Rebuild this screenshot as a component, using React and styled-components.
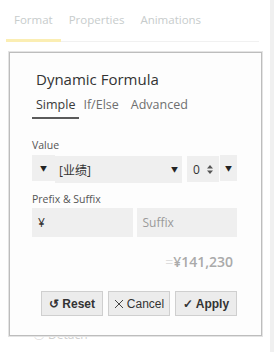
import * as React from "react";
import styled, { createGlobalStyle } from "styled-components";

const Global = createGlobalStyle`
  html, body {
    margin: 0;
    padding: 0;
    background: #fff;
  }
  body {
    width: 274px;
    height: 352px;
    overflow: hidden;
    font-family: "Open Sans", "Noto Sans CJK SC", sans-serif;
  }
`;

const Page = styled.div`
  position: relative;
  display: flex;
  width: 274px;
  height: 352px;
`;

const Panel = styled.div`
  flex: 1;
  display: flex;
  flex-direction: column;
`;

/* right scroll track */
const Track = styled.div`
  width: 4px;
  background: #f0f0f0;
`;

const TabBar = styled.div`
  display: flex;
  margin: 0 11px 0 6px;
  height: 41px;
  border-bottom: 1px solid #f1f1f1;
`;

const Tab = styled.div`
  padding: 12px 8px 0;
  font-size: 11.5px;
  color: #c7cccc;
  box-sizing: border-box;
  border-bottom: 3px solid ${(p) => (p.active ? "#fbeeb3" : "transparent")};
  margin-bottom: -1px;
`;

const Behind = styled.div`
  padding: 283px 0 0 33px;
  font-size: 12px;
  color: #cfcfcf;
`;

const Dialog = styled.div`
  position: absolute;
  left: 9px;
  top: 52px;
  width: 205px;
  height: 282px;
  background: #fdfdfd;
  border: 1px solid #bdbdbd;
  box-shadow: 0 0 0 1px #e4e4e4;
  padding: 0 24px 0 22px;
  display: flex;
  flex-direction: column;
  box-sizing: content-box;
`;

const Title = styled.div`
  margin: 15px 0 0 4px;
  font-size: 15px;
  color: #333;
  line-height: 22px;
`;

const SubTabs = styled.div`
  display: flex;
  margin-top: 6px;
`;

const SubTab = styled.div`
  padding: 0 4px 3px;
  margin-right: ${(p) => (p.active ? "0" : "4px")};
  font-size: 12.5px;
  line-height: 18px;
  color: ${(p) => (p.active ? "#3a3a3a" : "#6f6f6f")};
  border-bottom: 2px solid ${(p) => (p.active ? "#5a5a5a" : "transparent")};
`;

const Label = styled.div`
  margin-top: ${(p) => p.top}px;
  font-size: 10.5px;
  color: #555;
  line-height: 14px;
`;

const Row = styled.div`
  display: flex;
  align-items: flex-start;
  margin-top: ${(p) => p.top}px;
`;

const Field = styled.div`
  display: flex;
  align-items: center;
  justify-content: ${(p) => p.justify || "flex-start"};
  box-sizing: border-box;
  width: ${(p) => p.w}px;
  height: ${(p) => p.h}px;
  margin-left: ${(p) => p.gap || 0}px;
  margin-top: ${(p) => p.dy || 0}px;
  padding: 0 ${(p) => p.pad || 6}px;
  background: #efefef;
  font-size: 12px;
  color: ${(p) => (p.placeholder ? "#9a9a9a" : "#333")};
`;

const Caret = styled.span`
  font-size: 7px;
  color: #222;
  line-height: 1;
`;

const Result = styled.div`
  margin-top: 15px;
  align-self: flex-end;
  margin-right: 4px;
  font-size: 14px;
  font-weight: 600;
  color: #aaaaaa;
  line-height: 20px;
`;

const Eq = styled.span`
  color: #dddddd;
  font-weight: 400;
`;

const Buttons = styled.div`
  display: flex;
  justify-content: flex-end;
  gap: 5px;
  margin-top: 19px;
`;

const Button = styled.button`
  width: 62px;
  height: 25px;
  box-sizing: border-box;
  border: 1px solid #cfcfcf;
  background: #ececec;
  font-family: "Liberation Sans", Arial, sans-serif;
  font-size: 12px;
  font-weight: ${(p) => (p.light ? 400 : 700)};
  color: #333;
  display: flex;
  align-items: center;
  justify-content: center;
  gap: 3px;
  padding: 0;
`;

const Spinner = () => (
  <svg width="6" height="9" viewBox="0 0 6 9">
    <path d="M3 0 L6 3.5 L0 3.5 Z M3 9 L6 5.5 L0 5.5 Z" fill="#555" />
  </svg>
);

const XIcon = () => (
  <svg width="10" height="10" viewBox="0 0 10 10">
    <path d="M1 1 L9 9 M9 1 L1 9" stroke="#444" strokeWidth="1" />
  </svg>
);

export default function App() {
  return (
    <>
      <Global />
      <Page>
        <Panel>
          <TabBar>
            <Tab active>Format</Tab>
            <Tab>Properties</Tab>
            <Tab>Animations</Tab>
          </TabBar>
          <Behind>○ Detach</Behind>
        </Panel>
        <Track />

        <Dialog>
          <Title>Dynamic Formula</Title>
          <SubTabs>
            <SubTab active>Simple</SubTab>
            <SubTab>If/Else</SubTab>
            <SubTab>Advanced</SubTab>
          </SubTabs>

          <Label top={19}>Value</Label>
          <Row top={3}>
            <Field w={23} h={26} justify="center" pad={0}>
              <Caret>▼</Caret>
            </Field>
            <Field w={127} h={27} dy={1} pad={4} justify="space-between">
              <span>[业绩]</span>
              <Caret>▼</Caret>
            </Field>
            <Field w={32} h={26} gap={5} dy={1} pad={6} justify="space-between">
              <span>0</span>
              <Spinner />
            </Field>
            <Field w={17} h={26} gap={1} justify="center" pad={0}>
              <Caret>▼</Caret>
            </Field>
          </Row>

          <Label top={9}>Prefix &amp; Suffix</Label>
          <Row top={2}>
            <Field w={101} h={29}>¥</Field>
            <Field w={101} h={29} gap={4} placeholder>
              Suffix
            </Field>
          </Row>

          <Result>
            <Eq>=</Eq>¥141,230
          </Result>

          <Buttons>
            <Button>↺ Reset</Button>
            <Button light>
              <XIcon />
              Cancel
            </Button>
            <Button>✓ Apply</Button>
          </Buttons>
        </Dialog>
      </Page>
    </>
  );
}
